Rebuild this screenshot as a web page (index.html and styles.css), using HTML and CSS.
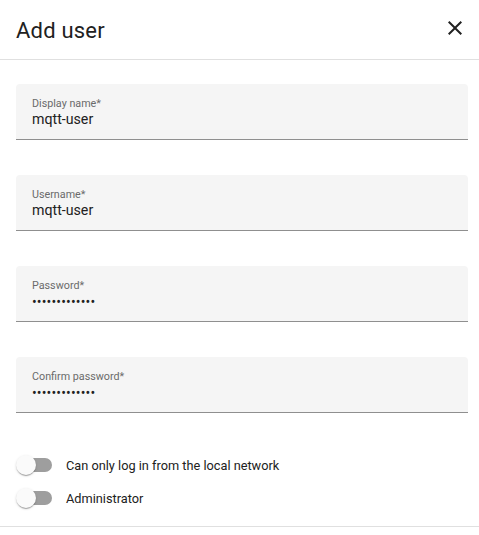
FILE: index.html
```html
<!DOCTYPE html>
<html>
<head>
<meta charset="utf-8">
<link rel="stylesheet" href="styles.css">
</head>
<body>
<div class="dialog">
  <header class="header">
    <h2 class="title">Add user</h2>
    <button class="close" aria-label="Close">
      <svg viewBox="0 0 24 24" width="24" height="24"><path d="M19,6.41L17.59,5L12,10.59L6.41,5L5,6.41L10.59,12L5,17.59L6.41,19L12,13.41L17.59,19L19,17.59L13.41,12L19,6.41Z" fill="#212121"/></svg>
    </button>
  </header>
  <div class="content">
    <div class="field">
      <span class="label">Display name*</span>
      <span class="value">mqtt-user</span>
    </div>
    <div class="field">
      <span class="label">Username*</span>
      <span class="value">mqtt-user</span>
    </div>
    <div class="field">
      <span class="label">Password*</span>
      <span class="value dots">•••••••••••••</span>
    </div>
    <div class="field">
      <span class="label">Confirm password*</span>
      <span class="value dots">•••••••••••••</span>
    </div>
    <div class="switches">
      <div class="switch-row">
        <span class="switch"><span class="track"></span><span class="thumb"></span></span>
        <span class="switch-label">Can only log in from the local network</span>
      </div>
      <div class="switch-row">
        <span class="switch"><span class="track"></span><span class="thumb"></span></span>
        <span class="switch-label">Administrator</span>
      </div>
    </div>
  </div>
</div>
</body>
</html>
```
FILE: styles.css
```css
html, body {
  margin: 0;
  padding: 0;
  background: #fff;
  font-family: Roboto, "Noto Sans", sans-serif;
  color: #212121;
}
.dialog {
  width: 479px;
}
.header {
  height: 59px;
  display: flex;
  align-items: center;
  justify-content: space-between;
  padding: 0 12px 0 16px;
  border-bottom: 1px solid #e0e0e0;
  box-sizing: content-box;
}
.title {
  margin: 0;
  font-size: 22px;
  font-weight: 400;
  color: #212121;
  letter-spacing: 0.2px;
  padding-top: 1px;
}
.close {
  border: none;
  background: none;
  padding: 0;
  width: 24px;
  height: 24px;
  margin-top: -3px;
  cursor: pointer;
}
.close svg { display: block; }
.content {
  padding: 24px 11px 0 16px;
  border-bottom: 1px solid #e0e0e0;
}
.field {
  height: 55px;
  background: #f5f5f5;
  border-radius: 4px 4px 0 0;
  border-bottom: 1px solid #8f8f8f;
  padding: 0 16px;
  display: flex;
  flex-direction: column;
  margin-bottom: 35px;
}
.label {
  font-size: 10.75px;
  color: #6b6b6b;
  margin-top: 13px;
  line-height: 13px;
}
.value {
  font-size: 14.2px;
  line-height: 20px;
  margin-top: -1px;
  color: #212121;
}
.dots {
  font-size: 14px;
  letter-spacing: 0.15px;
  line-height: 18px;
  margin-top: 1px;
}
.switches {
  display: flex;
  flex-direction: column;
  gap: 13px;
  padding: 7px 0 18px 0;
}
.switch-row {
  display: flex;
  align-items: center;
  height: 20px;
}
.switch {
  position: relative;
  width: 36px;
  height: 20px;
  margin-right: 14px;
  flex: none;
}
.track {
  position: absolute;
  left: 2px;
  top: 3px;
  width: 34px;
  height: 14px;
  border-radius: 7px;
  background: #9e9e9e;
}
.thumb {
  position: absolute;
  left: 0;
  top: 0;
  width: 20px;
  height: 20px;
  border-radius: 50%;
  background: #fafafa;
  box-shadow: 0 2px 1px -1px rgba(0,0,0,.2), 0 1px 1px 0 rgba(0,0,0,.14), 0 1px 3px 0 rgba(0,0,0,.12);
}
.switch-label {
  font-size: 12.75px;
  color: #212121;
}
```
